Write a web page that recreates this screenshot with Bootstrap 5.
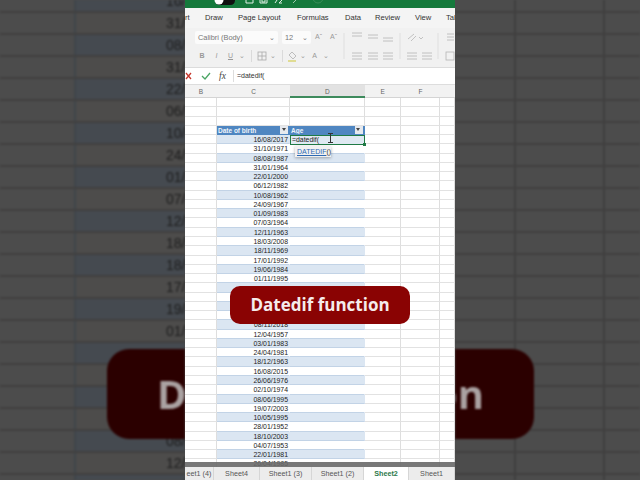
<!DOCTYPE html>
<html lang="en">
<head>
  <meta charset="UTF-8">
  <title>Datedif function</title>
  <link href="https://cdn.jsdelivr.net/npm/bootstrap@5.3.3/dist/css/bootstrap.min.css" rel="stylesheet">
  <style>
    html, body { width: 640px; height: 480px; overflow: hidden; margin: 0; background: #4c4c4c; }
    .stage { width: 640px; height: 480px; font-family: "Liberation Sans", Arial, sans-serif; }

    /* blurred side copies */
    .side { width: 185px; height: 480px; overflow: hidden; background: #4c4c4c; filter: blur(.8px); }
    .side-rows { margin-top: -9px; }
    .side-row { height: 22px; border-bottom: 2px solid #403f3f; }
    .side-cell { width: 111px; padding-left: 90px; border-left: 2px solid #3f454a; font-size: 14px; line-height: 21px; color: #1d1d1d; white-space: nowrap; overflow: hidden; background: #4d4c4b; }
    .side-gap { width: 74px; }
    .side-band { background: #454a50; }
    .side-r-a { width: 59px; }
    .side-r-b { width: 89px; border-left: 2px solid #3f3f3f; }
    .side-r-c { width: 37px; border-left: 2px solid #3f3f3f; }

    .big-part { top: 349px; height: 90px; background: #2b0000; font-family: "Open Sans", sans-serif; font-weight: 700; font-size: 40px; color: #aaa2a2; overflow: hidden; white-space: nowrap; }
    .big-left { left: 107px; width: 78px; padding-left: 50px; border-radius: 22px 0 0 22px; }
    .big-right { left: 0; width: 79px; padding-right: 50px; border-radius: 0 22px 22px 0; }

    /* excel window */
    .sheet-app { width: 270px; height: 480px; background: #fff; z-index: 1; overflow: hidden; }
    .title-strip { height: 8px; background: #15793c; overflow: hidden; }
    .ribbon-tabs { height: 20px; background: #f4f4f4; font-size: 7.6px; color: #333; white-space: nowrap; overflow: hidden; display: grid; grid-template-columns: 20px 33px 59px 48px 30px 40px 31px auto; }
    .ribbon-tabs span { margin-top: 4px; }
    .tools { height: 40px; background: #f1f1f1; border-bottom: 1px solid #dcdcdc; overflow: hidden; }
    .tools-left { width: 156px; padding-left: 10px; }
    .font-box { height: 13px; background: #fbfbfb; border-radius: 2px; font-size: 7.4px; color: #777; padding: 0 3px; margin-top: 3px; }
    .font-name { width: 83px; }
    .font-size { width: 29px; }
    .tool-txt { font-size: 7px; color: #999; }
    .tool-row { display: grid; grid-template-columns: 14px 15px 13px 10px 8px 13px 10px 8px 12px 10px 13px 9px; justify-items: center; align-items: center; margin-top: 6px; height: 12px; }
    .tool-sep { width: 1px; height: 12px; background: #dadada; }
    .formula { height: 17px; background: #fff; border-bottom: 1px solid #ddd; font-size: 7px; color: #333; }
    .col-heads { height: 13px; background: #f2f2f2; font-size: 6.5px; color: #666; border-bottom: 1px solid #d4d4d4; }
    .col-heads > div { text-align: center; line-height: 14px; }
    .col-on { background: #e2e2e2; border-bottom: 2px solid #3d8a5c; height: 13px; }

    .w-b { width: 32px; flex: none; }
    .w-c { width: 73px; flex: none; }
    .w-d { width: 74.5px; flex: none; }
    .w-e { width: 36.5px; flex: none; }
    .w-f { width: 39px; flex: none; }
    .w-g { width: 15px; flex: none; }

    .grid-area { height: 369px; overflow: hidden; font-size: 6.9px; color: #222; }
    .xl-row { height: 9.27px; line-height: 9px; }
    .xl-row > div { border-right: 1px solid #dedede; border-bottom: 1px solid #e2e2e2; height: 9.27px; white-space: nowrap; overflow: hidden; }
    .xl-date { text-align: right; padding-right: 1px; }
    .xl-band > .w-c, .xl-band > .w-d { background: #dbe6f2; border-bottom-color: #c2d3e6; border-right-color: #dbe6f2; }
    .xl-plain > .w-c, .xl-plain > .w-d { border-bottom-color: #c2d3e6; border-right-color: #fff; }
    .xl-head > .w-c, .xl-head > .w-d { background: #4f86c1; color: #eef4fa; font-weight: 700; font-size: 6.5px; padding-left: 1px; border-right-color: #4f86c1; border-bottom-color: #4f86c1; }
    .filter-btn { width: 8px; height: 8px; background: #e6e9ee; right: 1px; top: 0; }
    .filter-btn::after { content: ""; position: absolute; left: 1.5px; top: 2.5px; border: 2.5px solid transparent; border-top: 3px solid #444; }

    .active-cell { left: 105px; top: 37.1px; width: 75px; height: 10.2px; border: 1px solid #1f7a45; font-size: 6.9px; line-height: 8px; padding-left: 1px; color: #222; background: #dfe9f2; }
    .active-cell::after { content: ""; position: absolute; right: -2px; bottom: -2px; width: 3px; height: 3px; background: #1f7a45; }
    .i-beam { left: 143px; top: 35px; width: 5px; height: 10px; border-top: 1px solid #333; border-bottom: 1px solid #333; }
    .i-beam::after { content: ""; position: absolute; left: 2px; top: 0; width: 1px; height: 8px; background: #333; }
    .hint { left: 110px; top: 48px; width: 36px; height: 11px; background: #f1f1f1; box-shadow: 0 1px 3px rgba(0,0,0,.3); font-size: 7px; line-height: 11px; padding-left: 2px; color: #333; }
    .hint u { color: #2e69b3; }

    .h-scroll { left: 0; top: 364px; width: 270px; height: 5px; background: rgba(105,105,105,.9); }
    .sheet-tabs { height: 13px; background: #ececec; font-size: 7.2px; color: #555; white-space: nowrap; overflow: hidden; }
    .sheet-tabs > div { border-right: 1px solid #d6d6d6; text-align: center; line-height: 13px; flex: none; }
    .tab-cut { width: 29px; }
    .tab-a { width: 46px; }
    .tab-b { width: 52px; }
    .tab-on { width: 45px; background: #fff; color: #2c7a4b; font-weight: 700; }
    .front-banner { left: 45px; top: 286px; width: 180px; height: 38px; background: #8a0303; border-radius: 10px; font-family: "Open Sans", sans-serif; font-weight: 700; font-size: 17px; color: #f5ecec; z-index: 3; }
  </style>
</head>
<body>
  <div class="stage d-flex position-relative">
    <div class="side flex-none position-relative">
      <div class="side-rows" id="leftRows"></div>
      <div class="big-part big-left position-absolute d-flex align-items-center">D</div>
    </div>

    <div class="sheet-app d-flex flex-column position-relative flex-none">
      <div class="title-strip d-flex align-items-start">
        <svg width="270" height="8" viewBox="0 0 270 8" fill="none" stroke="#dff0e4" stroke-width="1">
          <rect x="30" y="-4" width="20" height="9" rx="4.5" fill="#111" stroke="none"/>
          <circle cx="34" cy="0" r="4.5" fill="#fff" stroke="none"/>
          <path d="M61 0v3h7V0M75 0v3h7V0M77 0v2h3V0"/>
          <path d="M90 3l2-3M94 3l3-3M97 3h-3"/>
          <path d="M108 3l3-3" stroke="#9cc9ab"/>
          <circle cx="133" cy="-2" r="5" stroke="#3a8c58"/>
        </svg>
      </div>
      <div class="ribbon-tabs">
        <span>rt</span><span>Draw</span><span>Page Layout</span><span>Formulas</span><span>Data</span><span>Review</span><span>View</span><span>Tal</span>
      </div>
      <div class="tools d-flex">
        <div class="tools-left d-flex flex-column">
          <div class="d-flex align-items-start">
            <div class="font-box font-name d-flex justify-content-between align-items-center"><span>Calibri (Body)</span><span>&#8964;</span></div>
            <div class="font-box font-size d-flex justify-content-between align-items-center ms-1"><span>12</span><span>&#8964;</span></div>
            <span class="tool-txt ms-1 mt-1">A&#710;</span>
            <span class="tool-txt ms-2 mt-1">A&#711;</span>
          </div>
          <div class="tool-row tool-txt">
            <b>B</b><i>I</i><u>U</u><span>&#8964;</span>
            <span class="tool-sep"></span>
            <svg width="10" height="10" viewBox="0 0 10 10" fill="none" stroke="#aaa" stroke-width=".8"><rect x="1" y="1" width="8" height="8"/><path d="M5 1v8M1 5h8"/></svg>
            <span>&#8964;</span>
            <span class="tool-sep"></span>
            <svg width="10" height="11" viewBox="0 0 10 11" fill="none" stroke="#b0b0b0" stroke-width=".8"><path d="M5 1l4 4-3 3-4-4z"/><path d="M1 10h8" stroke="#d9d36a" stroke-width="1.4"/></svg>
            <span>&#8964;</span>
            <span>A</span>
            <span>&#8964;</span>
          </div>
        </div>
        <svg width="114" height="40" viewBox="0 0 114 40" fill="none" stroke="#b5b5b5" stroke-width=".8">
          <path d="M3 5v26M59 5v26M97 5v26" stroke="#dcdcdc"/>
          <path d="M11 5h10M11 8h10M27 7h10M27 10h10M42 10h10M42 13h10"/>
          <path d="M11 25h10M11 28h10M11 31h10M27 25h10M27 28h10M27 31h10M42 25h10M42 28h10M42 31h10"/>
          <path d="M67 11l6-5M70 13l5-5M78 9l2 2 2-2"/>
          <path d="M66 25h10M66 28h10M66 31h10M81 25h10M81 28h10M81 31h10"/>
          <path d="M106 6h7M106 9h7M106 12h7"/>
          <rect x="105" y="24" width="8" height="8"/>
        </svg>
      </div>
      <div class="formula d-flex align-items-center position-relative">
        <svg width="52" height="14" viewBox="0 0 52 14" fill="none" class="flex-none">
          <path d="M1 4l5 6M6 4l-5 6" stroke="#c6362c" stroke-width="1.300"/>
          <path d="M17 7l3 3 5-6" stroke="#4aa564" stroke-width="1.300"/>
          <text x="34" y="10" font-family="Liberation Serif" font-style="italic" font-size="9.500" fill="#444">fx</text>
          <path d="M48.500 1v12" stroke="#ddd"/>
        </svg>
        <span>=datedif(</span>
      </div>
      <div class="col-heads d-flex">
        <div class="w-b">B</div><div class="w-c">C</div><div class="w-d col-on">D</div><div class="w-e">E</div><div class="w-f">F</div><div class="w-g"></div>
      </div>
      <div class="grid-area position-relative">
        <div id="sheetRows"></div>
        <div class="active-cell position-absolute">=datedif(</div>
        <div class="i-beam position-absolute"></div>
        <div class="hint position-absolute"><u>DATEDIF</u>()</div>
        <div class="h-scroll position-absolute"></div>
      </div>
      <div class="sheet-tabs d-flex">
        <div class="tab-cut">eet1 (4)</div>
        <div class="tab-a">Sheet4</div>
        <div class="tab-b">Sheet1 (3)</div>
        <div class="tab-b">Sheet1 (2)</div>
        <div class="tab-on">Sheet2</div>
        <div class="tab-a">Sheet1</div>
      </div>
      <div class="front-banner position-absolute d-flex align-items-center justify-content-center">Datedif function</div>
    </div>

    <div class="side flex-none position-relative">
      <div class="side-rows" id="rightRows"></div>
      <div class="big-part big-right position-absolute d-flex align-items-center justify-content-end">on</div>
    </div>
  </div>

  <script>
    // hidden rows behind the banner stay empty
    const dates = ['16/08/2017','31/10/1971','08/08/1987','31/01/1964','22/01/2000','06/12/1982','10/08/1962','24/09/1967','01/09/1983','07/03/1964','12/11/1963','18/03/2008','18/11/1969','17/01/1992','19/06/1984','01/11/1995','','','','','08/11/2018','12/04/1957','03/01/1983','24/04/1981','18/12/1963','16/08/2015','26/06/1976','02/10/1974','08/06/1995','19/07/2003','10/05/1995','28/01/1952','18/10/2003','04/07/1953','22/01/1981','26/04/1985'];

    let sheet = '';
    for (let i = 0; i < 3; i++) {
      sheet += '<div class="xl-row d-flex"><div class="w-b"></div><div class="w-c"></div><div class="w-d"></div><div class="w-e"></div><div class="w-f"></div><div class="w-g"></div></div>';
    }
    sheet += '<div class="xl-row xl-head d-flex"><div class="w-b"></div><div class="w-c position-relative">Date of birth<span class="filter-btn position-absolute"></span></div><div class="w-d position-relative">Age<span class="filter-btn position-absolute"></span></div><div class="w-e"></div><div class="w-f"></div><div class="w-g"></div></div>';
    dates.forEach((d, i) => {
      sheet += `<div class="xl-row ${i % 2 ? 'xl-plain' : 'xl-band'} d-flex"><div class="w-b"></div><div class="w-c xl-date">${d}</div><div class="w-d"></div><div class="w-e"></div><div class="w-f"></div><div class="w-g"></div></div>`;
    });
    document.getElementById('sheetRows').innerHTML = sheet;

    // side copies only show the start of each date
    let left = '', right = '';
    for (let i = 0; i < 23; i++) {
      left += `<div class="side-row d-flex"><div class="side-gap"></div><div class="side-cell ${i % 2 ? '' : 'side-band'}">${dates[i].slice(0, 3)}</div></div>`;
      right += '<div class="side-row d-flex"><div class="side-r-a"></div><div class="side-r-b"></div><div class="side-r-c"></div></div>';
    }
    document.getElementById('leftRows').innerHTML = left;
    document.getElementById('rightRows').innerHTML = right;
  </script>
  <script src="https://cdn.jsdelivr.net/npm/bootstrap@5.3.3/dist/js/bootstrap.bundle.min.js"></script>
</body>
</html>
